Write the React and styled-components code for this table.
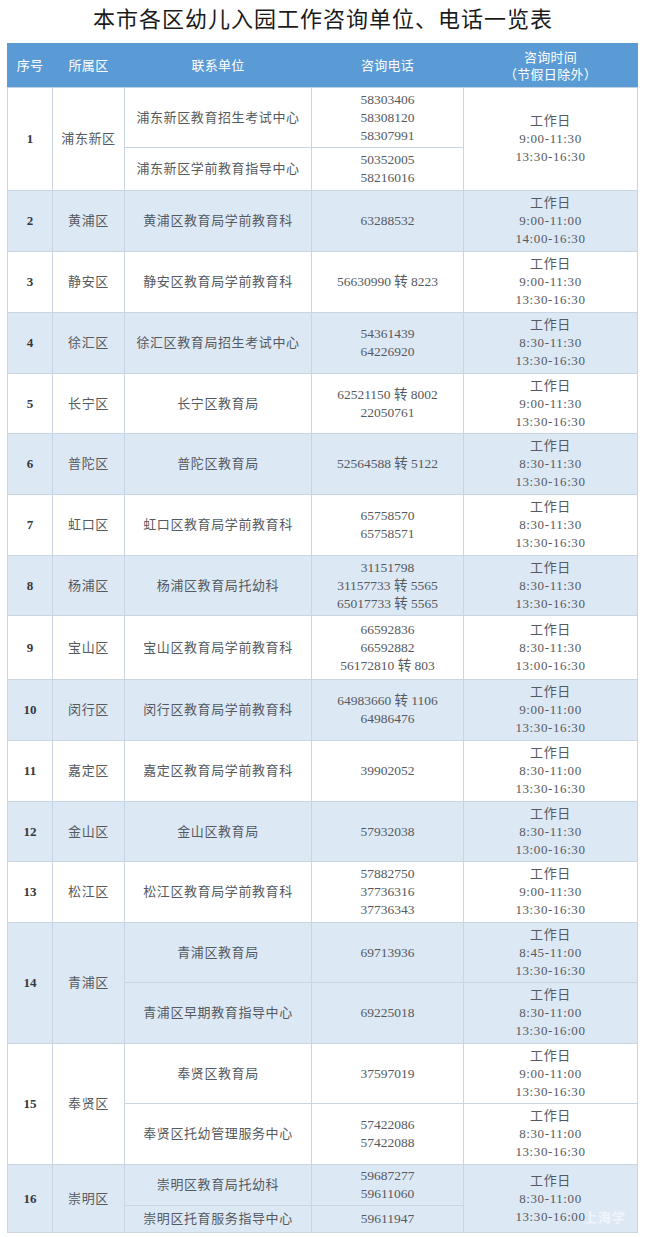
import React from 'react';
import styled, { createGlobalStyle } from 'styled-components';

const GlobalStyle = createGlobalStyle`
  html, body {
    margin: 0;
    padding: 0;
    background: #ffffff;
  }
  body {
    font-family: "Liberation Serif", "Noto Sans CJK SC", serif;
  }
`;

const districts = [
    { no: 1, area: '浦东新区', time: ['9:00-11:30', '13:30-16:30'], units: [
        { name: '浦东新区教育招生考试中心', phones: ['58303406', '58308120', '58307991'], h: 60 },
        { name: '浦东新区学前教育指导中心', phones: ['50352005', '58216016'], h: 43 },
    ] },
    { no: 2, area: '黄浦区', units: [{ name: '黄浦区教育局学前教育科', phones: ['63288532'], time: ['9:00-11:00', '14:00-16:30'], h: 61 }] },
    { no: 3, area: '静安区', units: [{ name: '静安区教育局学前教育科', phones: ['56630990 转 8223'], time: ['9:00-11:30', '13:30-16:30'], h: 61 }] },
    { no: 4, area: '徐汇区', units: [{ name: '徐汇区教育局招生考试中心', phones: ['54361439', '64226920'], time: ['8:30-11:30', '13:30-16:30'], h: 61 }] },
    { no: 5, area: '长宁区', units: [{ name: '长宁区教育局', phones: ['62521150 转 8002', '22050761'], time: ['9:00-11:30', '13:30-16:30'], h: 60 }] },
    { no: 6, area: '普陀区', units: [{ name: '普陀区教育局', phones: ['52564588 转 5122'], time: ['8:30-11:30', '13:30-16:30'], h: 61 }] },
    { no: 7, area: '虹口区', units: [{ name: '虹口区教育局学前教育科', phones: ['65758570', '65758571'], time: ['8:30-11:30', '13:30-16:30'], h: 61 }] },
    { no: 8, area: '杨浦区', units: [{ name: '杨浦区教育局托幼科', phones: ['31151798', '31157733 转 5565', '65017733 转 5565'], time: ['8:30-11:30', '13:30-16:30'], h: 60 }] },
    { no: 9, area: '宝山区', units: [{ name: '宝山区教育局学前教育科', phones: ['66592836', '66592882', '56172810 转 803'], time: ['8:30-11:30', '13:00-16:30'], h: 64 }] },
    { no: 10, area: '闵行区', units: [{ name: '闵行区教育局学前教育科', phones: ['64983660 转 1106', '64986476'], time: ['9:00-11:00', '13:30-16:30'], h: 61 }] },
    { no: 11, area: '嘉定区', units: [{ name: '嘉定区教育局学前教育科', phones: ['39902052'], time: ['8:30-11:00', '13:30-16:30'], h: 61 }] },
    { no: 12, area: '金山区', units: [{ name: '金山区教育局', phones: ['57932038'], time: ['8:30-11:30', '13:00-16:30'], h: 60 }] },
    { no: 13, area: '松江区', units: [{ name: '松江区教育局学前教育科', phones: ['57882750', '37736316', '37736343'], time: ['9:00-11:30', '13:30-16:30'], h: 61 }] },
    { no: 14, area: '青浦区', units: [
        { name: '青浦区教育局', phones: ['69713936'], time: ['8:45-11:00', '13:30-16:30'], h: 60 },
        { name: '青浦区早期教育指导中心', phones: ['69225018'], time: ['8:30-11:00', '13:30-16:00'], h: 61 },
    ] },
    { no: 15, area: '奉贤区', units: [
        { name: '奉贤区教育局', phones: ['37597019'], time: ['9:00-11:00', '13:30-16:30'], h: 60 },
        { name: '奉贤区托幼管理服务中心', phones: ['57422086', '57422088'], time: ['8:30-11:00', '13:30-16:30'], h: 61 },
    ] },
    { no: 16, area: '崇明区', time: ['8:30-11:00', '13:30-16:00'], units: [
        { name: '崇明区教育局托幼科', phones: ['59687277', '59611060'], h: 41 },
        { name: '崇明区托育服务指导中心', phones: ['59611947'], h: 27 },
    ] },
]

const Page = styled.div`
  width: 646px;
  position: relative;
`;

const Title = styled.h1`
  margin: 0;
  padding: 2px 0 11px;
  height: 30px;
  line-height: 30px;
  text-align: center;
  font-family: "Noto Sans CJK SC", sans-serif;
  font-size: 22px;
  font-weight: 400;
  letter-spacing: 1px;
  color: #1a1a1a;
`;

const Table = styled.table`
  margin-left: 7px;
  width: 630px;
  border-collapse: collapse;
  table-layout: fixed;
  font-size: 13px;
  color: #555a60;
`;

const HeadCell = styled.th`
  background: #5b9bd5;
  color: #ffffff;
  font-weight: 400;
  height: 43px;
  padding: 0;
  line-height: 17px;
  text-align: center;
  border: 1px solid #5b9bd5;
  border-bottom-color: #c4d3e4;
  letter-spacing: 0.3px;
`;

const Row = styled.tr`
  height: ${p => p.$h}px;
  background: ${p => (p.$striped ? '#dde8f5' : '#ffffff')};
`;

const Cell = styled.td`
  padding: 0;
  text-align: center;
  vertical-align: middle;
  line-height: 18px;
  border: 1px solid #c9d5e3;
  font-size: ${p => (p.$num ? '13.5px' : '13px')};
  letter-spacing: ${p => (p.$cn ? '0.6px' : '0')};
  font-weight: ${p => (p.$bold ? 700 : 400)};
  color: ${p => (p.$bold ? '#333840' : 'inherit')};
`;

const Line = styled.div`
  white-space: nowrap;
`;

const Watermark = styled.div`
  position: absolute;
  right: 20px;
  top: 1207px;
  font-family: "Noto Sans CJK SC", sans-serif;
  font-size: 13px;
  font-weight: 700;
  color: rgba(255, 255, 255, 0.6);
  letter-spacing: 1px;
`;

const Lines = ({ items }) => items.map((t, i) => <Line key={i}>{t}</Line>)

const TimeCell = ({ time, rowSpan }) => (
    <Cell rowSpan={rowSpan} $cn>
        <Lines items={['工作日', ...time]} />
    </Cell>
)

const App = () => {
    return <Page>
        <GlobalStyle />
        <Title>本市各区幼儿入园工作咨询单位、电话一览表</Title>
        <Table>
            <colgroup>
                <col style={{ width: 45 }} />
                <col style={{ width: 72 }} />
                <col style={{ width: 187 }} />
                <col style={{ width: 152 }} />
                <col style={{ width: 174 }} />
            </colgroup>
            <thead>
                <tr>
                    <HeadCell>序号</HeadCell>
                    <HeadCell>所属区</HeadCell>
                    <HeadCell>联系单位</HeadCell>
                    <HeadCell>咨询电话</HeadCell>
                    <HeadCell>
                        <Line>咨询时间</Line>
                        <Line>（节假日除外）</Line>
                    </HeadCell>
                </tr>
            </thead>
            <tbody>
                {
                    districts.map(d => d.units.map((u, i) => (
                        <Row key={d.no + '-' + i} $h={u.h} $striped={d.no % 2 === 0}>
                            {i === 0 && <Cell rowSpan={d.units.length} $bold>{d.no}</Cell>}
                            {i === 0 && <Cell rowSpan={d.units.length} $cn>{d.area}</Cell>}
                            <Cell $cn>{u.name}</Cell>
                            <Cell $num><Lines items={u.phones} /></Cell>
                            {u.time ? <TimeCell time={u.time} />
                                : i === 0 && <TimeCell time={d.time} rowSpan={d.units.length} />}
                        </Row>
                    )))
                }
            </tbody>
        </Table>
        <Watermark>上海学</Watermark>
    </Page>
}

export default App;
